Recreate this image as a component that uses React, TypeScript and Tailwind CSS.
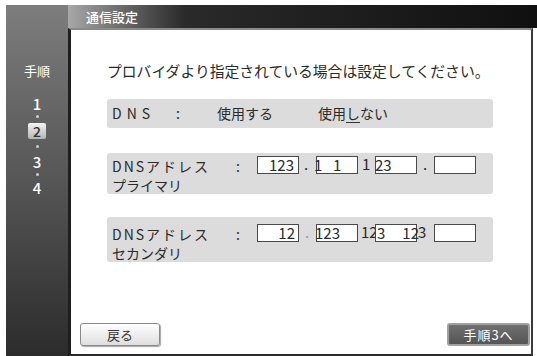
import type { ReactNode } from "react";

const font = { fontFamily: '"Noto Sans CJK JP", "Noto Sans", sans-serif' };

function Box({ children }: { children?: ReactNode }) {
  return (
    <div className="relative h-[18px] w-[42px] shrink-0 border border-[#4a4a4a] bg-white">
      {children}
    </div>
  );
}

function Gap({ children }: { children?: ReactNode }) {
  return <div className="relative h-[18px] w-[17px] shrink-0">{children}</div>;
}

function Digits({ className, children }: { className: string; children: ReactNode }) {
  return (
    <span className={`absolute top-[-3px] text-[15px] leading-[22px] text-[#2a2a2a] ${className}`}>
      {children}
    </span>
  );
}

export default function App() {
  return (
    <div
      className="flex h-[356px] w-[537px] overflow-hidden bg-white pl-[6px] pt-[5px]"
      style={font}
    >
      {/* 手順 sidebar */}
      <aside className="flex w-[62px] shrink-0 flex-col items-center bg-gradient-to-b from-[#7d7d7d] via-[#565656] to-[#2c2c2c] pt-[58px] text-white">
        <div className="text-[13px] leading-[16px]">手順</div>
        <div className="mt-[16px] text-[15px] font-medium leading-[18px]">1</div>
        <div className="mt-[2px] h-[3px] w-[3px] rounded-full bg-[#cfcfcf]" />
        <div className="mt-[5px] flex h-[16px] w-[18px] items-center justify-center rounded-[2px] bg-gradient-to-b from-[#f4f4f4] to-[#b5b5b5] text-[14px] font-medium text-[#333]">
          2
        </div>
        <div className="mt-[6px] h-[3px] w-[3px] rounded-full bg-[#cfcfcf]" />
        <div className="mt-[5px] text-[15px] font-medium leading-[18px]">3</div>
        <div className="mt-[2px] h-[3px] w-[3px] rounded-full bg-[#cfcfcf]" />
        <div className="mt-[3px] text-[15px] font-medium leading-[18px]">4</div>
      </aside>

      <div className="flex flex-1 flex-col">
        {/* title bar */}
        <div className="flex h-[23px] items-center bg-gradient-to-r from-[#a8a8a8] via-[#2a2a2a] via-[25%] to-[#101010] pl-[18px]">
          <span className="text-[13px] font-medium text-white">通信設定</span>
        </div>

        {/* panel */}
        <main className="mr-[4px] flex flex-1 flex-col border-t-[2px] border-r-[2px] border-b-[2px] border-l-[3px] border-t-[#8a8a8a] border-r-[#3a3a3a] border-b-[#2a2a2a] border-l-[#1e1e1e] bg-white text-[#2a2a2a]">
          <p className="mt-[31px] pl-[36px] text-[14.8px] leading-[20px]">
            プロバイダより指定されている場合は設定してください。
          </p>

          {/* DNS */}
          <div className="ml-[36px] mt-[18px] flex h-[29px] w-[386px] items-center rounded-[3px] bg-[#dcdcdc] pl-[5px] text-[14px]">
            <span className="w-[64px] tracking-[5px]">DNS</span>
            <span className="w-[41px]">:</span>
            <span className="w-[101px]">使用する</span>
            <span className="relative">
              使用しない
              <span className="absolute bottom-[1px] left-[28px] h-[1px] w-[14px] bg-[#333]" />
            </span>
          </div>

          {/* プライマリ */}
          <div className="ml-[36px] mt-[25px] flex h-[41px] w-[386px] rounded-[3px] bg-[#dcdcdc] pl-[5px] pt-[4px]">
            <div className="w-[124px] text-[14px] leading-[19px]">
              <div className="tracking-[2px]">DNSアドレス</div>
              <div>プライマリ</div>
            </div>
            <span className="w-[21px] text-[14px] leading-[19px]">:</span>
            <div className="mt-[-1px] flex">
              <Box>
                <Digits className="right-[4px]">123</Digits>
              </Box>
              <Gap>
                <Digits className="left-[5px]">.</Digits>
              </Gap>
              <Box>
                <Digits className="left-[-3px]">1</Digits>
                <Digits className="left-[16px]">1</Digits>
              </Box>
              <Gap>
                <Digits className="left-[4px]">1</Digits>
              </Gap>
              <Box>
                <Digits className="left-[-1px]">23</Digits>
              </Box>
              <Gap>
                <Digits className="left-[6px]">.</Digits>
              </Gap>
              <Box />
            </div>
          </div>

          {/* セカンダリ */}
          <div className="ml-[36px] mt-[23px] flex h-[45px] w-[386px] rounded-[3px] bg-[#dcdcdc] pl-[5px] pt-[8px]">
            <div className="w-[124px] text-[14px] leading-[19px]">
              <div className="tracking-[2px]">DNSアドレス</div>
              <div>セカンダリ</div>
            </div>
            <span className="w-[21px] text-[14px] leading-[19px]">:</span>
            <div className="mt-[-1px] flex">
              <Box>
                <Digits className="right-[3px]">12</Digits>
              </Box>
              <Gap>
                <Digits className="left-[6px] text-[#999]">.</Digits>
              </Gap>
              <Box>
                <Digits className="left-[-2px]">123</Digits>
              </Box>
              <Gap>
                <Digits className="left-[3px]">12</Digits>
              </Gap>
              <Box>
                <Digits className="left-[1px]">3</Digits>
                <Digits className="right-[-3px]">12</Digits>
              </Box>
              <Gap>
                <Digits className="left-[1px]">3</Digits>
              </Gap>
              <Box />
            </div>
          </div>

          {/* buttons */}
          <div className="mt-auto flex items-end justify-between pb-[8px] pl-[9px] pr-[1px]">
            <button
              type="button"
              className="flex h-[23px] w-[80px] items-center justify-center rounded-[3px] border border-[#8a8a8a] bg-gradient-to-b from-white to-[#dedede] text-[13px] text-[#333] shadow-[1px_1px_1px_rgba(0,0,0,0.35)]"
            >
              戻る
            </button>
            <button
              type="button"
              className="flex h-[23px] w-[83px] items-center justify-center rounded-[3px] border-2 border-[#a0a0a0] bg-gradient-to-b from-[#707070] to-[#555] text-[13px] tracking-[1px] text-white"
            >
              手順3へ
            </button>
          </div>
        </main>
      </div>
    </div>
  );
}
